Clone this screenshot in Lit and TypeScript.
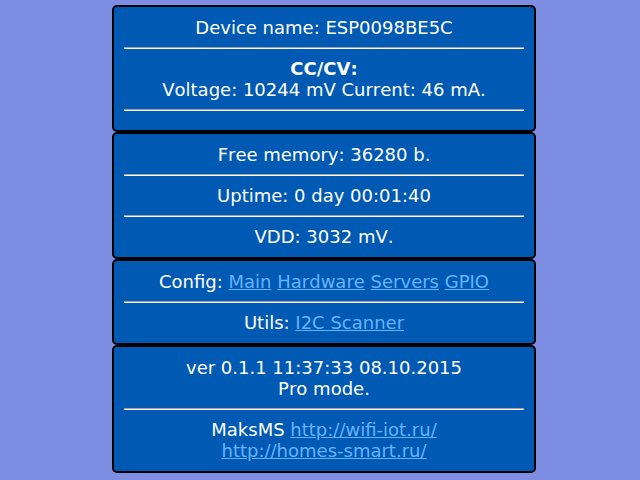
import { LitElement, html, css } from "lit";
import { customElement } from "lit/decorators.js";

@customElement("app-root")
export class AppRoot extends LitElement {
  static styles = css`
    :host {
      display: block;
      box-sizing: border-box;
      min-height: 100vh;
      padding: 5px 0 5px 8px;
      background: #7d8de1;
      color: #fff;
      font-family: "DejaVu Sans", sans-serif;
      font-size: 18px;
      font-kerning: none;
      line-height: 21px;
      text-align: center;
    }
    .page {
      max-width: 424px;
      margin: 0 auto;
    }
    .card {
      padding: 10px;
      border: 2px solid #000;
      border-radius: 5px;
      background: #0059b3;
    }
    .rule {
      height: 0;
      margin: 9px 0;
      border: 0;
      border-top: 1px solid #a0a0a0;
      border-bottom: 1px solid #fff;
    }
    .link {
      color: #66b3ff;
    }
  `;

  render() {
    return html`
      <main class="page">
        <section class="card">
          Device name: ESP0098BE5C
          <hr class="rule" />
          <b>CC/CV:</b><br />
          Voltage: 10244 mV Current: 46 mA.
          <hr class="rule" />
        </section>
        <section class="card">
          Free memory: 36280 b.
          <hr class="rule" />
          Uptime: 0 day 00:01:40
          <hr class="rule" />
          VDD: 3032 mV.
        </section>
        <nav class="card">
          Config:
          <a class="link" href="#main">Main</a>
          <a class="link" href="#hardware">Hardware</a>
          <a class="link" href="#servers">Servers</a>
          <a class="link" href="#gpio">GPIO</a>
          <hr class="rule" />
          Utils: <a class="link" href="#i2c">I2C Scanner</a>
        </nav>
        <footer class="card">
          ver 0.1.1 11:37:33 08.10.2015<br />
          Pro mode.
          <hr class="rule" />
          MaksMS <a class="link" href="http://wifi-iot.ru/">http://wifi-iot.ru/</a><br />
          <a class="link" href="http://homes-smart.ru/">http://homes-smart.ru/</a>
        </footer>
      </main>
    `;
  }
}
